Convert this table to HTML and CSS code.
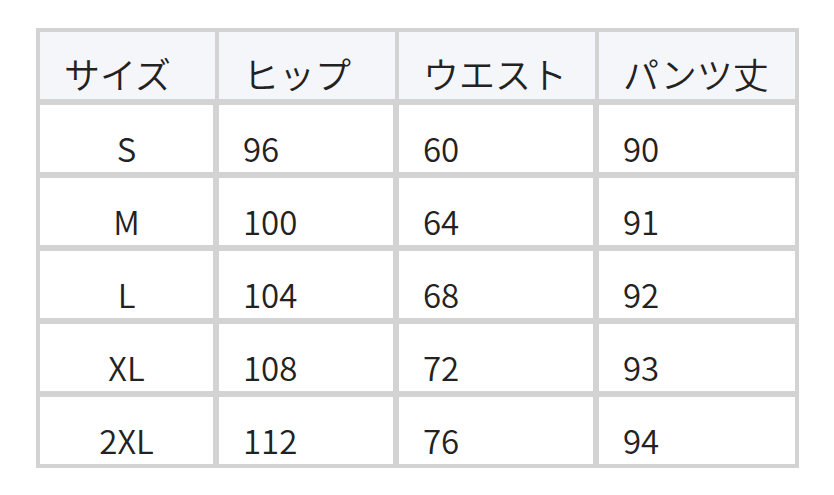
FILE: index.html
```html
<!DOCTYPE html>
<html lang="ja">
<head>
<meta charset="utf-8">
<link rel="stylesheet" href="styles.css">
</head>
<body>
<table class="size-table">
  <colgroup>
    <col class="c1"><col class="c2"><col class="c3"><col class="c4">
  </colgroup>
  <thead>
    <tr><th>サイズ</th><th>ヒップ</th><th>ウエスト</th><th>パンツ丈</th></tr>
  </thead>
  <tbody>
    <tr><td class="size">S</td><td>96</td><td>60</td><td>90</td></tr>
    <tr><td class="size">M</td><td>100</td><td>64</td><td>91</td></tr>
    <tr><td class="size">L</td><td>104</td><td>68</td><td>92</td></tr>
    <tr><td class="size">XL</td><td>108</td><td>72</td><td>93</td></tr>
    <tr><td class="size">2XL</td><td>112</td><td>76</td><td>94</td></tr>
  </tbody>
</table>
</body>
</html>
```
FILE: styles.css
```css
html, body {
  margin: 0;
  padding: 0;
  background: #ffffff;
}
body {
  padding: 28px 0 0 36px;
  font-family: "Noto Sans CJK JP", "Noto Sans", sans-serif;
  color: #222222;
}
.size-table {
  table-layout: fixed;
  border-collapse: separate;
  border-spacing: 4px;
  background: #d3d3d3;
  width: 763px;
}
.c1 { width: 175px; }
.c2 { width: 176px; }
.c3 { width: 196px; }
.c4 { width: 196px; }
.size-table th,
.size-table td {
  box-sizing: border-box;
  height: 67px;
  padding: 0 0 0 24px;
  text-align: left;
  vertical-align: bottom;
  font-weight: 350;
}
.size-table th {
  background: #f5f6fa;
  font-size: 36px;
  line-height: 52px;
  padding-left: 24px;
}
.size-table td {
  background: #ffffff;
  font-size: 33px;
  line-height: 48px;
  height: 69px;
  border-top: 2px solid #d3d3d3;
}
.size-table td:not(:last-child) {
  border-right: 2px solid #d3d3d3;
}
.size-table td.size {
  text-align: center;
  padding-left: 0;
}
```
